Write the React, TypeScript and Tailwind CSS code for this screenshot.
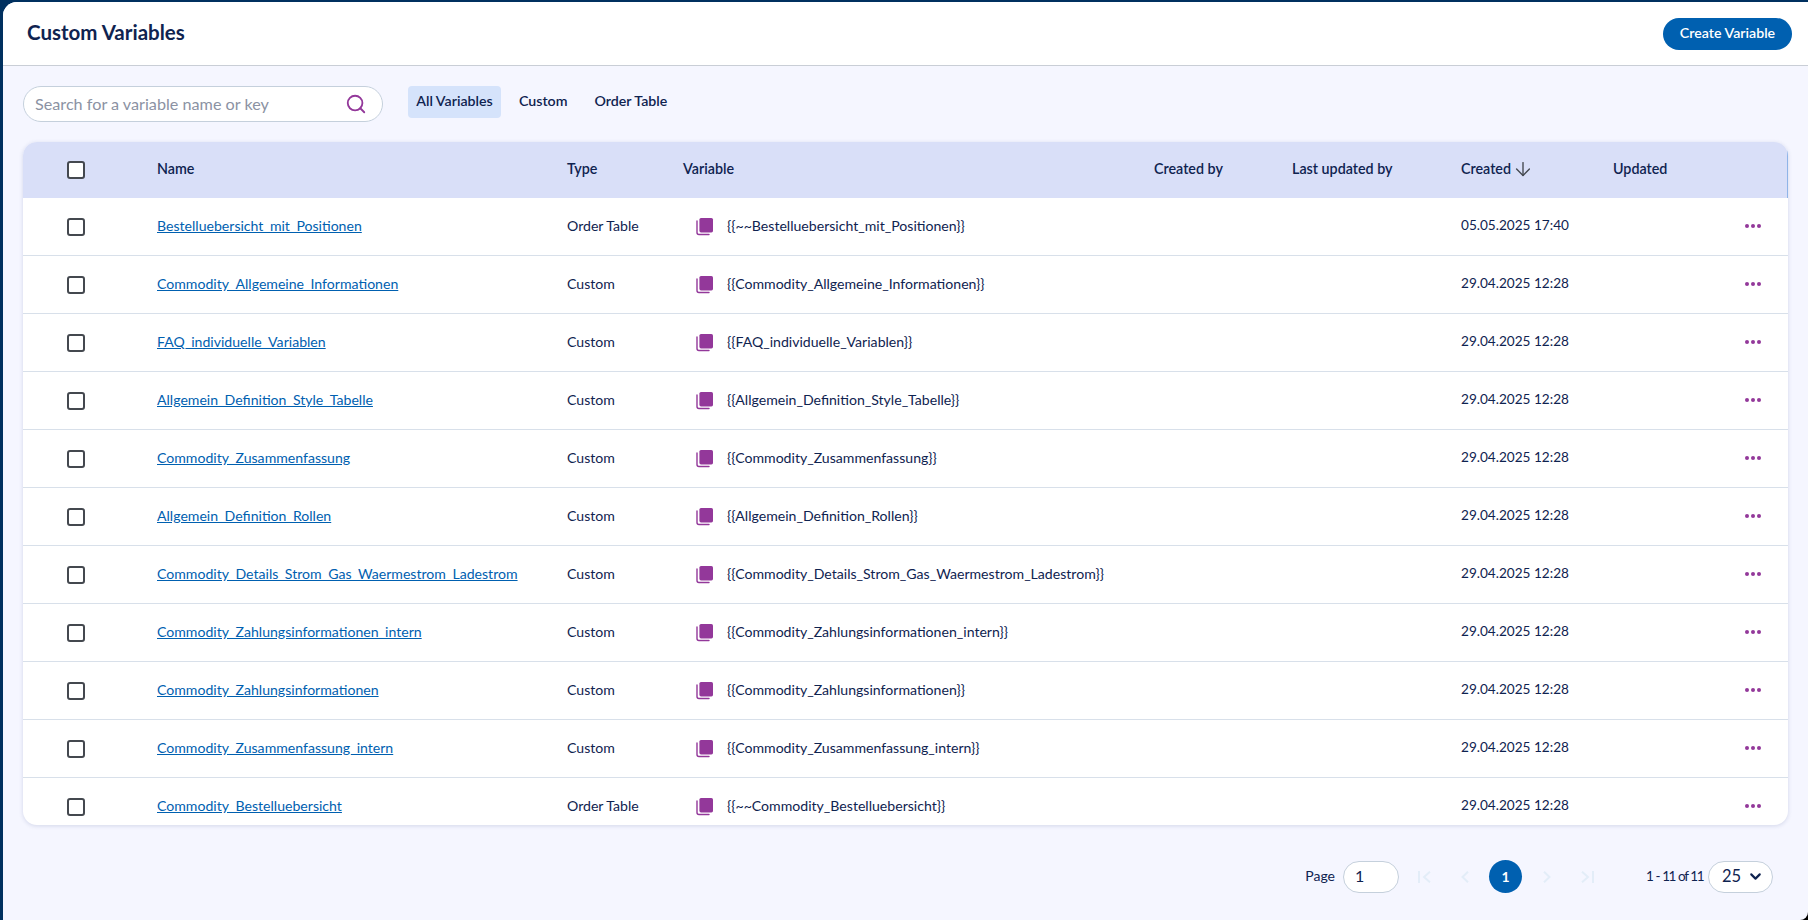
import { ArrowDown, ChevronDown, Search } from 'lucide-react';

const rows = [
  { name: 'Bestelluebersicht_mit_Positionen', type: 'Order Table', variable: '{{~~Bestelluebersicht_mit_Positionen}}', created: '05.05.2025 17:40' },
  { name: 'Commodity_Allgemeine_Informationen', type: 'Custom', variable: '{{Commodity_Allgemeine_Informationen}}', created: '29.04.2025 12:28' },
  { name: 'FAQ_individuelle_Variablen', type: 'Custom', variable: '{{FAQ_individuelle_Variablen}}', created: '29.04.2025 12:28' },
  { name: 'Allgemein_Definition_Style_Tabelle', type: 'Custom', variable: '{{Allgemein_Definition_Style_Tabelle}}', created: '29.04.2025 12:28' },
  { name: 'Commodity_Zusammenfassung', type: 'Custom', variable: '{{Commodity_Zusammenfassung}}', created: '29.04.2025 12:28' },
  { name: 'Allgemein_Definition_Rollen', type: 'Custom', variable: '{{Allgemein_Definition_Rollen}}', created: '29.04.2025 12:28' },
  { name: 'Commodity_Details_Strom_Gas_Waermestrom_Ladestrom', type: 'Custom', variable: '{{Commodity_Details_Strom_Gas_Waermestrom_Ladestrom}}', created: '29.04.2025 12:28' },
  { name: 'Commodity_Zahlungsinformationen_intern', type: 'Custom', variable: '{{Commodity_Zahlungsinformationen_intern}}', created: '29.04.2025 12:28' },
  { name: 'Commodity_Zahlungsinformationen', type: 'Custom', variable: '{{Commodity_Zahlungsinformationen}}', created: '29.04.2025 12:28' },
  { name: 'Commodity_Zusammenfassung_intern', type: 'Custom', variable: '{{Commodity_Zusammenfassung_intern}}', created: '29.04.2025 12:28' },
  { name: 'Commodity_Bestelluebersicht', type: 'Order Table', variable: '{{~~Commodity_Bestelluebersicht}}', created: '29.04.2025 12:28' },
];

const gridCols = 'grid grid-cols-[134px_410px_116px_471px_138px_169px_152px_100px_1fr] items-center';

function Checkbox() {
  return <div className="w-[18px] h-[18px] ml-[44px] border-2 border-[#44484f] rounded-[3px] bg-white" />;
}

function CopyIcon() {
  return (
    <svg width="18" height="19" viewBox="0 0 18 19" className="mt-[2px]">
      <path d="M1 4v11.5a2 2 0 0 0 2 2h10" fill="none" stroke="#93389a" strokeWidth="1.4" strokeLinecap="round" />
      <rect x="3.4" y="1" width="13.6" height="14.4" rx="1.6" fill="#93389a" />
    </svg>
  );
}

function PageEnd({ flip }: { flip?: boolean }) {
  return (
    <svg width="13" height="12" viewBox="0 0 13 12" fill="none" stroke="#e3edf8" strokeWidth="2" className={flip ? '-scale-x-100' : ''}>
      <path d="M1 0v12" />
      <path d="M12 0.7 6 6l6 5.3" />
    </svg>
  );
}

function PageStep({ flip }: { flip?: boolean }) {
  return (
    <svg width="8" height="12" viewBox="0 0 8 12" fill="none" stroke="#e3edf8" strokeWidth="2" className={flip ? '-scale-x-100' : ''}>
      <path d="M7 0.7 1.5 6 7 11.3" />
    </svg>
  );
}

export default function App() {
  return (
    <div className="w-[1808px] h-[920px] overflow-hidden bg-[linear-gradient(315deg,#000_8px,#00305f_8px)] font-['Lato',sans-serif] text-[#0f2350]">
      <div className="ml-[3px] mt-[2px] h-[918px] bg-[#f5f6ff] rounded-tl-[14px] rounded-br-[8px] overflow-hidden">
        <header className="h-[63px] bg-white border-b border-[#c9ced6] flex items-center justify-between pl-[24px] pr-[16px] box-content">
          <h1 className="text-[20.5px] font-bold leading-none text-[#0f2350] -mt-[2px]">Custom Variables</h1>
          <button className="h-[32px] w-[129px] pb-[1px] rounded-full bg-[#0060b0] text-white text-[14.2px] font-semibold">Create Variable</button>
        </header>

        <div className="pl-[20px] pr-[20px]">
          <div className="flex items-start pt-[20px]">
            <div className="w-[360px] h-[36px] bg-white border border-[#c5d0dc] rounded-full flex items-center justify-between pl-[11px] pr-[15px]">
              <span className="text-[16.2px] text-[#8b92a3]">Search for a variable name or key</span>
              <Search size={22} strokeWidth={2} className="text-[#93389a]" />
            </div>
            <div className="flex items-center ml-[25px] text-[14.2px] font-semibold">
              <span className="h-[32px] w-[93px] pb-[2px] rounded-[4px] bg-[#d5e3fb] flex items-center justify-center">All Variables</span>
              <span className="ml-[18px] pb-[2px]">Custom</span>
              <span className="ml-[27px] pb-[2px]">Order Table</span>
            </div>
          </div>

          <div className="mt-[20px] w-[1765px] h-[683px] bg-white rounded-[14px] overflow-hidden shadow-[0_1px_4px_rgba(60,80,140,0.18)]">
            <div className={`${gridCols} h-[56px] bg-[#d9dff8] text-[14.3px] font-semibold border-r border-[#8fb4e8] [&>span]:pb-[3px]`}>
              <Checkbox />
              <span>Name</span>
              <span>Type</span>
              <span>Variable</span>
              <span>Created by</span>
              <span>Last updated by</span>
              <span className="flex items-center gap-[1px]">
                Created <ArrowDown size={22} strokeWidth={1.5} className="text-[#44484f]" />
              </span>
              <span>Updated</span>
              <span />
            </div>
            {rows.map((row) => (
              <div key={row.name} className={`${gridCols} h-[58px] border-b border-[#d8e0ea] text-[14.1px] [&>span]:pb-[2px] [&>a]:pb-[2px]`}>
                <Checkbox />
                <a className="text-[#0060b0] underline whitespace-nowrap">{row.name}</a>
                <span>{row.type}</span>
                <span className="flex items-center whitespace-nowrap">
                  <span className="ml-[13px] w-[31px]"><CopyIcon /></span>
                  {row.variable}
                </span>
                <span />
                <span />
                <span className="text-[13.6px]">{row.created}</span>
                <span />
                <span className="flex gap-[2px] ml-[32px]">
                  <i className="w-[4px] h-[4px] rounded-full bg-[#93389a]" />
                  <i className="w-[4px] h-[4px] rounded-full bg-[#93389a]" />
                  <i className="w-[4px] h-[4px] rounded-full bg-[#93389a]" />
                </span>
              </div>
            ))}
          </div>

          <div className="mt-[35px] h-[33px] flex items-center justify-end pr-[15px] text-[14px]">
            <span className="pb-[2px]">Page</span>
            <span className="ml-[8px] w-[56px] h-[32px] pb-[1px] bg-white border border-[#c5d0dc] rounded-full flex items-center pl-[11px] text-[16px]">1</span>
            <span className="ml-[19px] flex"><PageEnd /></span>
            <span className="ml-[30px] flex"><PageStep /></span>
            <span className="ml-[20px] w-[33px] h-[33px] rounded-full bg-[#0060b0] text-white font-bold flex items-center justify-center">1</span>
            <span className="ml-[21px] flex"><PageStep flip /></span>
            <span className="ml-[30px] flex"><PageEnd flip /></span>
            <span className="ml-[52px] w-[55px] whitespace-nowrap text-[13.5px] tracking-[-1.4px] [word-spacing:1px]">1 - 11 of 11</span>
            <span className="ml-[7px] w-[65px] h-[32px] bg-white border border-[#c5d0dc] rounded-full flex items-center pl-[13px] gap-[6px] text-[16.5px]">
              25 <ChevronDown size={17} strokeWidth={3} />
            </span>
          </div>
        </div>
      </div>
    </div>
  );
}
